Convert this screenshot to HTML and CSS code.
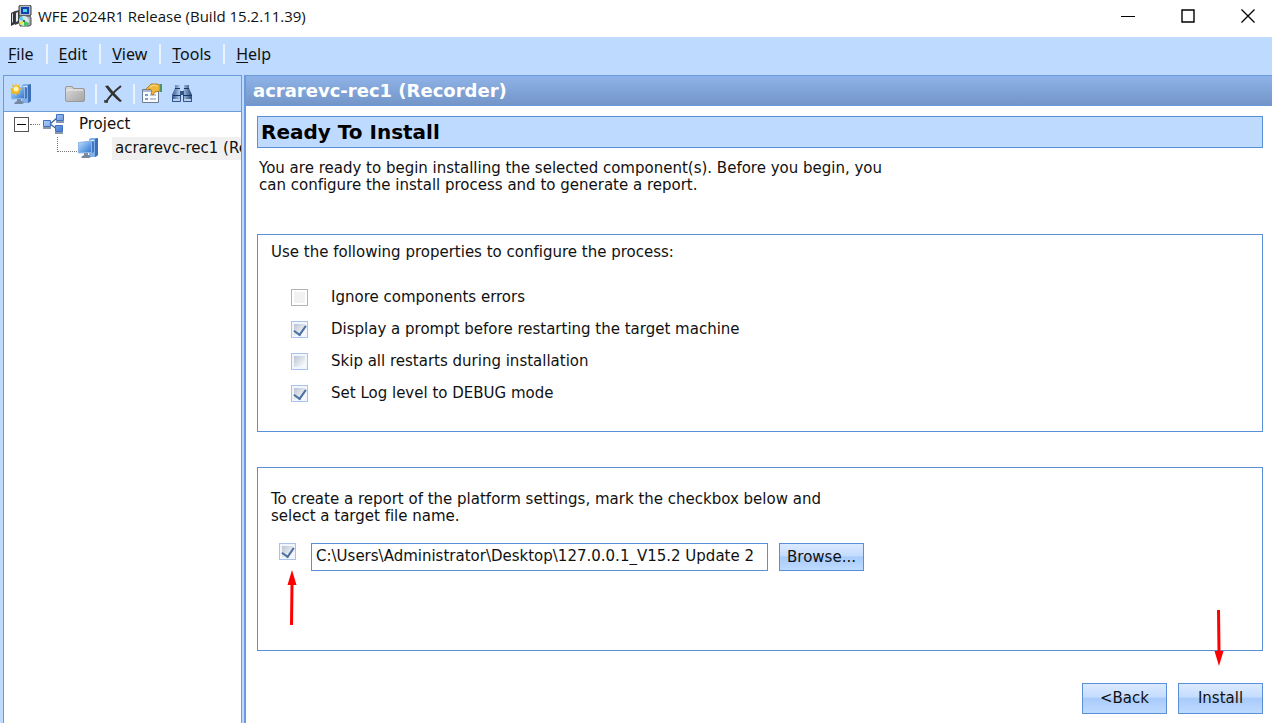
FILE: index.html
```html
<!DOCTYPE html>
<html lang="en">
<head>
<meta charset="UTF-8">
<meta name="viewport" content="width=device-width, initial-scale=1.0">
<title>WFE 2024R1 Release (Build 15.2.11.39)</title>
<link rel="stylesheet" href="styles.css">
</head>

<body>

<!-- Shared icons -->
<svg class="defs" width="0" height="0" aria-hidden="true">
  <defs>
    <linearGradient id="screen" x1="0" y1="0" x2="1" y2="1">
      <stop offset="0" stop-color="#c2defa"/>
      <stop offset="0.5" stop-color="#72aaea"/>
      <stop offset="1" stop-color="#2e72c8"/>
    </linearGradient>
    <linearGradient id="grey" x1="0" y1="0" x2="1" y2="1">
      <stop offset="0" stop-color="#dcdcdc"/>
      <stop offset="1" stop-color="#a4a4a4"/>
    </linearGradient>
    <linearGradient id="box" x1="0" y1="0" x2="1" y2="1">
      <stop offset="0" stop-color="#cfe2fb"/>
      <stop offset="1" stop-color="#3f76d0"/>
    </linearGradient>
    <linearGradient id="tube" x1="0" y1="0" x2="1" y2="0">
      <stop offset="0" stop-color="#31568f"/>
      <stop offset="0.45" stop-color="#c4d8f2"/>
      <stop offset="1" stop-color="#234579"/>
    </linearGradient>
    <symbol id="computer" viewBox="0 0 22 22">
      <path d="M12 2l2-1h7v17l-2 2h-7z" fill="#7fb0ea"/>
      <path d="M18 2l3-1v17l-3 2z" fill="#3c6fb8"/>
      <path d="M13 3.500h4" stroke="#e0edfc"/>
      <path d="M1.500 5.500l13-1.500v11.500l-13 0.500z" fill="url(#screen)" stroke="#8fb6e6"/>
      <path d="M15 4l2 1v10l-2 1z" fill="#4376bc"/>
      <path d="M7 16h4v3H7z" fill="#7b8ca3"/>
      <path d="M4 20l3-2h5l2 2-2 1H5z" fill="#7588a3"/>
    </symbol>
  </defs>
</svg>

<header class="titlebar">
  <svg class="app-icon" width="22" height="22" viewBox="0 0 22 22" aria-hidden="true">
    <path d="M1 8l4-2v13l-4 2z" fill="#30343a"/>
    <path d="M2 9l1-1v9l-1 1z" fill="#d8dde2"/>
    <path d="M5 6l5-1v13l-5 2z" fill="#3a3f46"/>
    <path d="M6 8l2-1v9l-2 1z" fill="#e6eaee"/>
    <path d="M9 1l2-1h9l1 1v9l-2 1H9z" fill="#b3b9c1" stroke="#33373d"/>
    <path d="M11 2h8v7h-8z" fill="#123fae"/>
    <path d="M13 4h4v3h-4z" fill="#46d9ea"/>
    <path d="M9 11h11l1 2v7l-2 1H10z" fill="#a4a9b0" stroke="#4b4f55"/>
    <circle cx="14" cy="16" r="5" fill="#d7e4ea"/>
    <path d="M14 16l-5-1a5 5 0 0 1 3-4z" fill="#58cfe0"/>
    <path d="M14 16l-3 4a5 5 0 0 1-2-3z" fill="#e8df38"/>
    <path d="M14 16l5 2a5 5 0 0 1-5 3z" fill="#42c653"/>
    <circle cx="14" cy="16" r="1" fill="#333"/>
  </svg>
  <h1>WFE 2024R1 Release (Build 15.2.11.39)</h1>
  <div class="window-buttons">
    <button type="button" aria-label="Minimize">
      <svg width="16" height="16" viewBox="0 0 16 16"><path d="M1 8.500h14" stroke="#000"/></svg>
    </button>
    <button type="button" aria-label="Maximize">
      <svg width="16" height="16" viewBox="0 0 16 16"><path d="M2 2h12v12H2z" fill="none" stroke="#000" stroke-width="1.400"/></svg>
    </button>
    <button type="button" aria-label="Close">
      <svg width="16" height="16" viewBox="0 0 16 16"><path d="M1.500 1.500l13 13M14.500 1.500l-13 13" stroke="#000" stroke-width="1.300"/></svg>
    </button>
  </div>
</header>

<nav class="menubar">
  <button type="button"><u>F</u>ile</button>
  <button type="button"><u>E</u>dit</button>
  <button type="button"><u>V</u>iew</button>
  <button type="button"><u>T</u>ools</button>
  <button type="button"><u>H</u>elp</button>
</nav>

<div class="workspace">
  <aside class="sidebar">
    <div class="toolbar">
      <button type="button" class="new" aria-label="New computer">
        <svg width="22" height="22" viewBox="0 0 22 22">
          <use href="#computer"/>
          <path d="M6 0l1 3 3-2-1 4 3 1-3 2 1 3-3-1-1 3-2-3-3 1 1-3-2-2 3-1-1-4 3 2z" fill="#f8b91e"/>
          <circle cx="6" cy="6" r="2.500" fill="#fff7b5"/>
        </svg>
      </button>
      <button type="button" class="open" aria-label="Open folder">
        <svg width="22" height="22" viewBox="0 0 22 22">
          <path d="M1.500 5q0-1.500 1.500-1.500h5q1 0 1.500 2H19q1.500 0 1.500 1.500v10q0 1.500-1.500 1.500H3q-1.500 0-1.500-1.500z" fill="url(#grey)" stroke="#999"/>
          <path d="M2.500 8.500q0-1.500 1.500-1.500h15" fill="none" stroke="#f0f0f0"/>
        </svg>
      </button>
      <span class="divider"></span>
      <button type="button" aria-label="Delete">
        <svg width="22" height="22" viewBox="0 0 22 22">
          <path d="M2 3l3-0.500Q10 9 17 16l2 2-2 1Q9 13 2 3z" fill="#333"/>
          <path d="M18 3Q8 11 3 19" fill="none" stroke="#333" stroke-width="2"/>
          <path d="M2 17v2h3" fill="none" stroke="#333" stroke-width="1.500"/>
        </svg>
      </button>
      <span class="divider"></span>
      <button type="button" class="props" aria-label="Properties">
        <svg width="22" height="22" viewBox="0 0 22 22">
          <path d="M1.500 6.500h16v13h-16z" fill="#f8fafd" stroke="#6c7c94"/>
          <path d="M2 7h15v2H2z" fill="#a8bbd6"/>
          <path d="M4 11h3v2H4zM4 15h3v2H4z" fill="#7d9cc8"/>
          <path d="M9 12h6M9 16h6" stroke="#8195b2"/>
          <path d="M5 6l5-5h6l3 1v6l-5 1-2 3-2-1 1-3-2-2-3 1z" fill="#efb83c" stroke="#94681a" stroke-width="0.700"/>
          <path d="M9 4l4-2 3 1" fill="none" stroke="#ffe69a"/>
          <path d="M19 1h2v8h-2z" fill="#4d9460"/>
        </svg>
      </button>
      <button type="button" aria-label="Find">
        <svg width="22" height="22" viewBox="0 0 22 22">
          <path d="M4 2h5v3l1 3v11H1v-7l3-7zM13 2h5v3l3 7v7h-9V8l1-3z" fill="url(#tube)"/>
          <path d="M9 8h4v4H9z" fill="#31568f"/>
          <path d="M4 5.500h5M13 5.500h5M2 12.500h8M12 12.500h9" stroke="#173565"/>
          <path d="M2 16h7v2H2zM13 16h7v2h-7z" fill="#bcd0ec"/>
          <path d="M1.500 13v5.500h8V13M12.500 13v5.500h8V13" fill="none" stroke="#31568f"/>
        </svg>
      </button>
    </div>

    <ul class="tree">
      <li class="node">
        <button type="button" class="expander" aria-label="Collapse Project"></button>
        <span class="branch"></span>
        <svg width="22" height="22" viewBox="0 0 22 22" aria-hidden="true">
          <path d="M7 11l7-6M7 11l7 5" stroke="#48658f" stroke-width="1.500"/>
          <path d="M0.500 7.500h7v6h-7zM13.500 1.500h7v6h-7zM12.500 12.500h7v6h-7z" fill="url(#box)" stroke="#3f72c4"/>
          <path d="M0 15h8M13 9h8M12 20h8" stroke="#8a97aa" stroke-width="2"/>
        </svg>
        <span class="label">Project</span>
      </li>
      <li class="node child">
        <span class="elbow"></span>
        <svg width="22" height="22" aria-hidden="true"><use href="#computer"/></svg>
        <span class="label selected">acrarevc-rec1 (Recorder)</span>
      </li>
    </ul>
  </aside>

  <main class="details">
    <h2 class="details-title">acrarevc-rec1 (Recorder)</h2>

    <form class="page">
      <h3>Ready To Install</h3>
      <p class="intro">You are ready to begin installing the selected component(s). Before you begin, you<br>can configure the install process and to generate a report.</p>

      <section class="panel options">
        <p>Use the following properties to configure the process:</p>
        <label><input type="checkbox" disabled>Ignore components errors</label>
        <label><input type="checkbox" checked>Display a prompt before restarting the target machine</label>
        <label><input type="checkbox">Skip all restarts during installation</label>
        <label><input type="checkbox" checked>Set Log level to DEBUG mode</label>
      </section>

      <section class="panel report">
        <p>To create a report of the platform settings, mark the checkbox below and<br>select a target file name.</p>
        <div class="file-row">
          <span class="marked">
            <input type="checkbox" aria-label="Create report" checked>
            <svg class="arrow arrow-up" width="12" height="56" viewBox="0 0 12 56" aria-hidden="true">
              <path d="M6 0l4.500 15h-3L7 55H4l0.500-40h-3z" fill="#f00"/>
            </svg>
          </span>
          <input type="text" aria-label="Target file name" value="C:\Users\Administrator\Desktop\127.0.0.1_V15.2 Update 2">
          <button type="button" class="btn">Browse...</button>
        </div>
      </section>

      <div class="actions">
        <button type="button" class="btn">&lt;Back</button>
        <span class="marked">
          <button type="submit" class="btn">Install</button>
          <svg class="arrow arrow-down" width="12" height="56" viewBox="0 0 12 56" aria-hidden="true">
            <path d="M4 0h3l0.500 41h3L6 56 1.500 41h3z" fill="#f00"/>
          </svg>
        </span>
      </div>
    </form>
  </main>
</div>

</body>
</html>
```
FILE: styles.css
```css
* { margin: 0; padding: 0; box-sizing: border-box; }
body { min-height: 100vh; display: flex; flex-direction: column; background-color: #bedaff; color: #111; font-family: "DejaVu Sans", Verdana, sans-serif; font-size: 15px; line-height: 17px; font-variant-ligatures: none; }
button, input { font: inherit; color: inherit; }
button { background: none; border: none; }
svg { display: block; flex-shrink: 0; }
.defs { position: absolute; }

/* Window title */
.titlebar { display: flex; align-items: center; height: 37px; padding: 0 16px 5px 10px; background-color: #fff; }
.titlebar h1 { flex: 1; margin-left: 6px; font-family: "Open Sans", "Segoe UI", sans-serif; font-size: 15px; font-weight: normal; line-height: 20px; }
.window-buttons { display: flex; gap: 44px; }

/* Menu */
.menubar { display: flex; align-items: center; height: 38px; padding: 0 8px 4px; font-family: "Noto Sans", "Segoe UI", sans-serif; font-size: 16px; line-height: 20px; }
.menubar button { padding-right: 12px; }
.menubar button + button { padding-left: 11px; border-left: 2px solid #e9f3ff; }
.menubar u { text-underline-offset: 2px; }

.workspace { flex: 1; display: flex; gap: 2px; padding-left: 3px; }

/* Project tree */
.sidebar { width: 239px; flex-shrink: 0; overflow: hidden; background-color: #fff; border: 1px solid #6b9ade; border-bottom: none; }
.toolbar { display: flex; align-items: center; height: 36px; padding: 0 6px; border-bottom: 1px solid #6b9ade; background-color: #bedaff; }
.toolbar .open { margin: 0 9px 0 32px; }
.toolbar .divider { width: 2px; height: 20px; background-color: #e9f3ff; }
.toolbar .divider + button { margin: 0 8px 0 6px; }
.tree { list-style: none; padding: 0 0 0 10px; }
.node { display: flex; align-items: center; height: 24px; white-space: nowrap; }
.expander { position: relative; width: 15px; height: 15px; border: 1px solid #555; }
.expander::before { content: ""; position: absolute; top: 6px; left: 2px; width: 9px; height: 1px; background-color: #000; }
.branch { width: 10px; margin: 0 3px 0 1px; border-top: 1px dotted #777; }
.node .label { margin-left: 11px; padding: 0 3px; line-height: 23px; }
.child { padding-left: 43px; }
.child .label { margin-left: 13px; }
.elbow { flex-shrink: 0; width: 20px; height: 15px; margin-bottom: 7px; border: 1px dotted #777; border-width: 0 0 1px 1px; }
.selected { background-color: #f0f0f0; }

/* Details */
.details { flex: 1; min-width: 0; display: flex; flex-direction: column; background-color: #fff; border-left: 2px solid #6b9ade; }
.details-title { height: 31px; padding: 0 7px; border: 1px solid #6b9ade; border-width: 1px 0; background: linear-gradient(#8fb3e8, #7395c8); color: #fff; font-size: 18px; line-height: 29px; }
.page { flex: 1; display: flex; flex-direction: column; padding: 10px 9px 9px 11px; }
.page h3 { padding: 0 3px; border: 1px solid #5b8fd8; background-color: #bedaff; color: #000; font-size: 20px; line-height: 30px; }
.intro { padding: 12px 2px 40px; }
.panel { border: 1px solid #5b8fd8; }
.options { padding: 9px 13px 22px; }
.options p { margin-bottom: 20px; }
.options label { display: flex; align-items: center; gap: 23px; height: 32px; padding-left: 20px; }
.report { margin-top: 35px; padding: 23px 13px 79px; }
.file-row { display: flex; align-items: flex-start; margin-top: 18px; padding-left: 8px; }

input[type="checkbox"] { appearance: none; display: block; width: 17px; height: 17px; border: 1px solid #a9c3e9; background: linear-gradient(135deg, #b9c5d4, #fff) 2px 2px / 11px 11px no-repeat #f2f6fc; }
input[type="checkbox"]:disabled { border-color: #b4b4b4; background: #f2f2f2; box-shadow: inset 0 0 0 2px #fff; }
input[type="checkbox"]:checked::before { content: ""; display: block; width: 6px; height: 10px; margin: 1px 0 0 4px; border: solid #4d70a4; border-width: 0 2px 2px 0; transform: rotate(35deg); }
input[type="text"] { width: 457px; height: 28px; margin: 0 11px 0 15px; padding: 0 1px 2px 4px; border: 1px solid #5b8fd8; background-color: #fff; }
.btn { width: 85px; height: 28px; border: 1px solid #5b8fd8; background: linear-gradient(#dceaff, #c4dcff 45%, #a8cbfb 50%, #bedaff); }
.actions { display: flex; justify-content: flex-end; gap: 11px; margin-top: auto; }
.actions .btn { height: 31px; }

/* Pointers */
.marked { position: relative; }
.arrow { position: absolute; pointer-events: none; }
.arrow-up { top: 27px; left: 7px; }
.arrow-down { bottom: 48px; left: 35px; }
```
